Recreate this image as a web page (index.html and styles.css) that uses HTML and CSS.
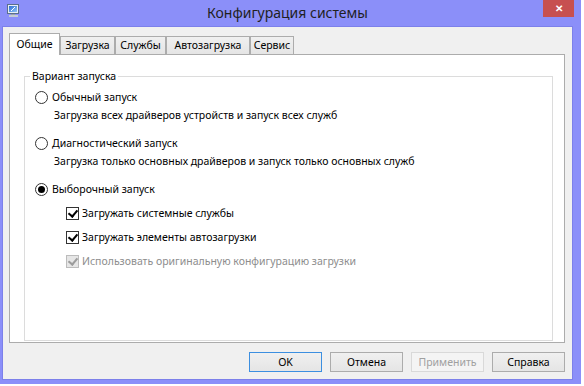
FILE: index.html
```html
<!DOCTYPE html>
<html lang="ru">
<head>
    <meta charset="UTF-8">
    <title>Конфигурация системы</title>
    <link rel="stylesheet" href="styles.css">
</head>
<body>
    <div class="window">
        <div class="titlebar">
            <svg class="app-icon" width="13" height="13" viewBox="0 0 13 13">
                <defs>
                    <linearGradient id="scr" x1="0" y1="0" x2="1" y2="1">
                        <stop offset="0" stop-color="#2f6fd6"/>
                        <stop offset="1" stop-color="#8fc4f4"/>
                    </linearGradient>
                </defs>
                <rect x="0.5" y="0.5" width="11" height="9" fill="#e8eef6" stroke="#5a6f8c"/>
                <rect x="2" y="2" width="8" height="6" fill="url(#scr)"/>
                <path d="M4 7 L8 3" stroke="#fff" stroke-width="1"/>
                <rect x="4" y="10" width="4" height="1" fill="#9aa4b0"/>
                <rect x="2" y="11" width="9" height="2" fill="#c4ccd6"/>
            </svg>
            <div class="title">Конфигурация системы</div>
            <div class="close">&#x2715;</div>
        </div>

        <div class="client">
            <div class="tabs">
                <div class="tab active" style="width: 51px">Общие</div>
                <div class="tab" style="width: 55px">Загрузка</div>
                <div class="tab" style="width: 51px">Службы</div>
                <div class="tab" style="width: 84px">Автозагрузка</div>
                <div class="tab" style="width: 44px">Сервис</div>
            </div>

            <div class="panel">
                <fieldset class="group">
                    <legend>Вариант запуска</legend>

                    <div class="option">
                        <span class="radio"></span>Обычный запуск
                    </div>
                    <div class="desc">Загрузка всех драйверов устройств и запуск всех служб</div>

                    <div class="option">
                        <span class="radio"></span>Диагностический запуск
                    </div>
                    <div class="desc">Загрузка только основных драйверов и запуск только основных служб</div>

                    <div class="option">
                        <span class="radio checked"></span>Выборочный запуск
                    </div>

                    <div class="check-list">
                        <div class="check-row">
                            <span class="checkbox"></span>Загружать системные службы
                        </div>
                        <div class="check-row">
                            <span class="checkbox"></span>Загружать элементы автозагрузки
                        </div>
                        <div class="check-row disabled">
                            <span class="checkbox"></span>Использовать оригинальную конфигурацию загрузки
                        </div>
                    </div>
                </fieldset>
            </div>

            <div class="buttons">
                <button class="btn default">OK</button>
                <button class="btn">Отмена</button>
                <button class="btn" disabled>Применить</button>
                <button class="btn">Справка</button>
            </div>
        </div>
    </div>
</body>
</html>
```

FILE: styles.css
```css
* { margin: 0; padding: 0; box-sizing: border-box; }

body {
    font-family: 'Noto Sans', 'Open Sans', sans-serif;
    font-size: 10.5px;
    color: #000;
    background: #fff;
}

.window {
    width: 581px;
    height: 384px;
    background: #8b8ff9;
    padding: 0 8px 4px 2px;
    display: flex;
    flex-direction: column;
}

/* title bar */
.titlebar {
    height: 26px;
    display: flex;
    align-items: flex-start;
    position: relative;
}

.app-icon {
    margin: 4px 0 0 5px;
}

.title {
    flex: 1;
    text-align: center;
    font-size: 14px;
    line-height: 20px;
    color: #1f1f1f;
    margin: 3px 18px 0 0;
}

.close {
    position: absolute;
    right: -1px;
    top: 0;
    width: 31px;
    height: 17px;
    background: #c75050;
    color: #fff;
    font-size: 10px;
    font-weight: bold;
    line-height: 16px;
    text-align: center;
}

/* client area */
.client {
    flex: 1;
    background: #f0f0f0;
    border: 1px solid #7c80ea;
    padding: 6px 7px 0 6px;
    display: flex;
    flex-direction: column;
}

.tabs {
    display: flex;
    align-items: flex-end;
    height: 21px;
    position: relative;
    z-index: 1;
}

.tab {
    height: 18px;
    border: 1px solid #acacac;
    border-bottom: none;
    background: linear-gradient(#f0f0f0, #e5e5e5);
    text-align: center;
    line-height: 17px;
    color: #000;
}

.tab.active {
    height: 22px;
    margin-bottom: -1px;
    background: #fff;
    line-height: 20px;
}

.panel {
    height: 289px;
    background: #fff;
    border: 1px solid #acacac;
    padding: 0 11px 0 14px;
}

.group {
    height: 273px;
    margin-top: 13px;
    border: 1px solid #dcdcdc;
    padding: 5px 0 0 10px;
}

.group legend {
    margin-left: -5px;
    padding: 0 2px;
    line-height: 16px;
}

.option {
    display: flex;
    align-items: center;
    height: 16px;
    margin-top: 12px;
}

.option:first-of-type {
    margin-top: 0;
}

.radio {
    width: 13px;
    height: 13px;
    border: 1px solid #333;
    border-radius: 50%;
    background: #fff;
    margin-right: 4px;
    display: flex;
    align-items: center;
    justify-content: center;
}

.radio.checked::after {
    content: '';
    width: 7px;
    height: 7px;
    border-radius: 50%;
    background: #000;
}

.desc {
    height: 16px;
    line-height: 16px;
    margin: 2px 0 0 19px;
}

.check-list {
    margin: 8px 0 0 31px;
    display: flex;
    flex-direction: column;
    gap: 8px;
}

.check-row {
    display: flex;
    align-items: center;
    height: 16px;
}

.checkbox {
    width: 13px;
    height: 13px;
    border: 1px solid #333;
    background: #fff;
    margin-right: 3px;
    position: relative;
}

.checkbox::after {
    content: '';
    position: absolute;
    left: 3px;
    top: 0;
    width: 4px;
    height: 7px;
    border: solid #000;
    border-width: 0 2px 2px 0;
    transform: rotate(40deg);
}

.check-row.disabled {
    color: #8d8d8d;
}

.check-row.disabled .checkbox {
    border-color: #bcbcbc;
    background: #e6e6e6;
}

.check-row.disabled .checkbox::after {
    border-color: #9c9c9c;
}

/* dialog buttons */
.buttons {
    display: flex;
    justify-content: flex-end;
    gap: 8px;
    margin-top: 9px;
}

.btn {
    width: 73px;
    height: 20px;
    font-family: inherit;
    font-size: 10.5px;
    color: #000;
    border: 1px solid #acacac;
    background: linear-gradient(#f0f0f0, #e5e5e5);
}

.btn.default {
    border-color: #3c8fe0;
}

.btn:disabled {
    color: #a0a0a0;
    border-color: #d9d9d9;
    background: #f4f4f4;
}
```
